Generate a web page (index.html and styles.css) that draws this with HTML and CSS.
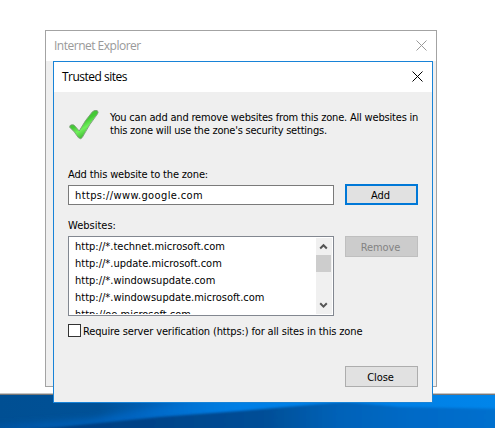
FILE: index.html
```
<!DOCTYPE html>
<html lang="en">
<head>
<meta charset="utf-8">
<title>Trusted sites</title>
<link rel="stylesheet" href="styles.css">
</head>
<body>
<svg class="wallpaper" viewBox="0 0 495 33" preserveAspectRatio="none" aria-hidden="true">
  <defs>
    <linearGradient id="sky"><stop offset="0" stop-color="#004f93"/><stop offset=".2" stop-color="#005197"/><stop offset=".3" stop-color="#005fb4"/><stop offset=".45" stop-color="#0078df"/><stop offset="1" stop-color="#0085ea"/></linearGradient>
    <linearGradient id="beam"><stop offset="0" stop-color="#0055a4"/><stop offset=".4" stop-color="#0065c2"/><stop offset=".7" stop-color="#0080e6"/><stop offset="1" stop-color="#0082e8"/></linearGradient>
    <linearGradient id="shade"><stop offset="0" stop-color="#003f80"/><stop offset=".25" stop-color="#004388"/><stop offset=".5" stop-color="#004f98"/><stop offset=".65" stop-color="#0062b8"/><stop offset=".8" stop-color="#006ac6"/><stop offset="1" stop-color="#0070cf"/></linearGradient>
    <filter id="wide" x="-10%" y="-50%" width="120%" height="200%"><feGaussianBlur stdDeviation="3"/></filter>
    <filter id="soft" x="-5%" y="-20%" width="110%" height="140%"><feGaussianBlur stdDeviation=".8"/></filter>
  </defs>
  <rect width="495" height="33" fill="url(#sky)"/>
  <path d="M-5 30L90 24L200 5H345V9L240 16L50 36H-5Z" fill="url(#beam)" filter="url(#wide)"/>
  <path d="M30 34L60 32L160 22L240 16L345 7L400 12L505 14V45H30Z" fill="url(#shade)" filter="url(#soft)"/>
</svg>
<section class="window parent">
  <header class="titlebar"><h1>Internet Explorer</h1>
    <svg class="x" viewBox="0 0 11 11"><path d="M.5 .5l10 10M10.5 .5l-10 10"/></svg></header>
</section>
<section class="window dialog">
  <header class="titlebar"><h2>Trusted sites</h2>
    <svg class="x" viewBox="0 0 11 11"><path d="M.5 .5l10 10M10.5 .5l-10 10"/></svg></header>
  <div class="content">
    <div class="intro">
      <svg class="check" viewBox="0 0 32 32">
        <defs><linearGradient id="green" x1="0" y1="0" x2=".6" y2="1"><stop offset="0" stop-color="#4cb83d"/><stop offset=".5" stop-color="#43c935"/><stop offset=".68" stop-color="#71f05c"/><stop offset="1" stop-color="#2ca823"/></linearGradient></defs>
        <path d="M1.7 18.3Q1.3 16.2 3.6 15.8Q5.8 15.3 7 17.1L11.2 22Q17.3 10.8 24.4 2.8Q26.8 .8 29.2 1.6Q31 3 29.4 5.1Q21.5 14.8 14.4 28.3Q13 31 10.3 28.6Q6.7 22.5 1.7 18.3Z" fill="url(#green)" stroke="#7c9c78" stroke-width=".9"/>
      </svg>
      <p><span class="p1">You can add and remove websites from this zone. All websites in</span><br><span class="p2">this zone will use the zone's security settings.</span></p>
    </div>
    <div class="row add-row">
      <div class="field">
        <label for="site"><span class="l1">Add this website to the zone:</span></label>
        <input id="site" type="text" value="https://www.google.com">
      </div>
      <button class="primary">Add</button>
    </div>
    <div class="row list-row">
      <div class="field">
        <label>Websites:</label>
        <div class="list">
          <ul>
            <li>http://*.technet.microsoft.com</li>
            <li>http://*.update.microsoft.com</li>
            <li>http://*.windowsupdate.com</li>
            <li>http://*.windowsupdate.microsoft.com</li>
            <li>http://oe.microsoft.com</li>
          </ul>
          <div class="scrollbar">
            <svg viewBox="0 0 15 17"><path d="M4.2 10.5L7.5 7.2L10.8 10.5"/></svg>
            <div class="thumb"></div>
            <svg class="down" viewBox="0 0 15 17"><path d="M4.2 6.3L7.5 9.6L10.8 6.3"/></svg>
          </div>
        </div>
      </div>
      <button disabled>Remove</button>
    </div>
    <label class="verify"><input type="checkbox"><span class="v1">Require server verification (https:) for all sites in this zone</span></label>
    <div class="actions"><button>Close</button></div>
  </div>
</section>
</body>
</html>
```
FILE: styles.css
```
* { box-sizing: border-box; }
body {
  position: relative;
  width: 495px;
  height: 428px;
  margin: 0;
  padding-top: 393px;
  overflow: hidden;
  background: #fff;
  color: #000;
  font: 11px/13px "DejaVu Sans Condensed", "DejaVu Sans", sans-serif;
  white-space: nowrap;
}
h1, h2, p, ul { margin: 0; padding: 0; }
.wallpaper { display: block; width: 495px; height: 35px; border-top: 1px solid #c4c4c4; background: #777; padding-top: 1px; }
.window { position: absolute; display: flex; flex-direction: column; background: #efefef; }
.parent { left: 45px; top: 30px; width: 392px; height: 357px; border: 1px solid #a3a3a3; }
.dialog { left: 53px; top: 61px; width: 380px; height: 342px; border: 1px solid #1883d7; }
.titlebar { display: flex; flex: none; align-items: center; justify-content: space-between; height: 30px; padding: 0 9px 0 8px; background: #fff; }
.titlebar h1, .titlebar h2 { font: 12px/16px "Open Sans", sans-serif; letter-spacing: -.5px; }
.parent .titlebar { color: #999; }
.x { width: 11px; height: 11px; margin-bottom: 1px; fill: none; stroke: currentColor; stroke-width: 1; }
.content { display: flex; flex-direction: column; padding: 17px 14px 0; }
.intro { display: flex; gap: 10px; height: 59px; }
.check { flex: none; width: 32px; height: 32px; }
.intro p { padding-top: 2px; }
.p1 { letter-spacing: -.19px; }
.p2 { letter-spacing: -.22px; }
.l1 { letter-spacing: -.15px; }
.v1 { letter-spacing: -.14px; }
.row { display: flex; gap: 11px; align-items: flex-start; }
.field { width: 266px; }
.field label { display: block; height: 17px; }
.add-row { height: 51px; }
.add-row button { margin-top: 16px; }
.list-row { height: 105px; }
.list-row button { margin-top: 17px; }
input[type="text"] { display: block; width: 266px; height: 20px; margin: 0; padding: 0 6px; border: 1px solid #7a7a7a; border-radius: 0; background: #fff; color: #000; font: inherit; letter-spacing: .38px; outline: none; }
button { width: 73px; height: 21px; padding: 1px 2px 0 0; border: 1px solid #adadad; border-radius: 0; background: #e1e1e1; color: #000; font: inherit; letter-spacing: -.1px; }
button.primary { border: 2px solid #0078d7; }
button:disabled { border-color: #bfbfbf; background: #ccc; color: #838383; }
.list { display: flex; width: 266px; height: 80px; padding: 1px; border: 1px solid #828790; background: #fff; }
.list ul { flex: 1; height: 76px; padding-left: 5px; overflow: hidden; list-style: none; }
.list li { height: 17px; line-height: 17px; }
.scrollbar { display: flex; flex-direction: column; width: 16px; height: 76px; background: #f0f0f0; }
.scrollbar svg { width: 15px; height: 17px; fill: none; stroke: #555; stroke-width: 2; }
.scrollbar .down { margin-top: auto; }
.thumb { width: 15px; height: 17px; background: #cdcdcd; }
.verify { display: flex; gap: 2px; height: 42px; }
.verify input { appearance: none; width: 13px; height: 13px; margin: 0; border: 1px solid #333; background: #fff; }
.verify span { padding-top: 1px; }
.actions { display: flex; justify-content: flex-end; }
```
